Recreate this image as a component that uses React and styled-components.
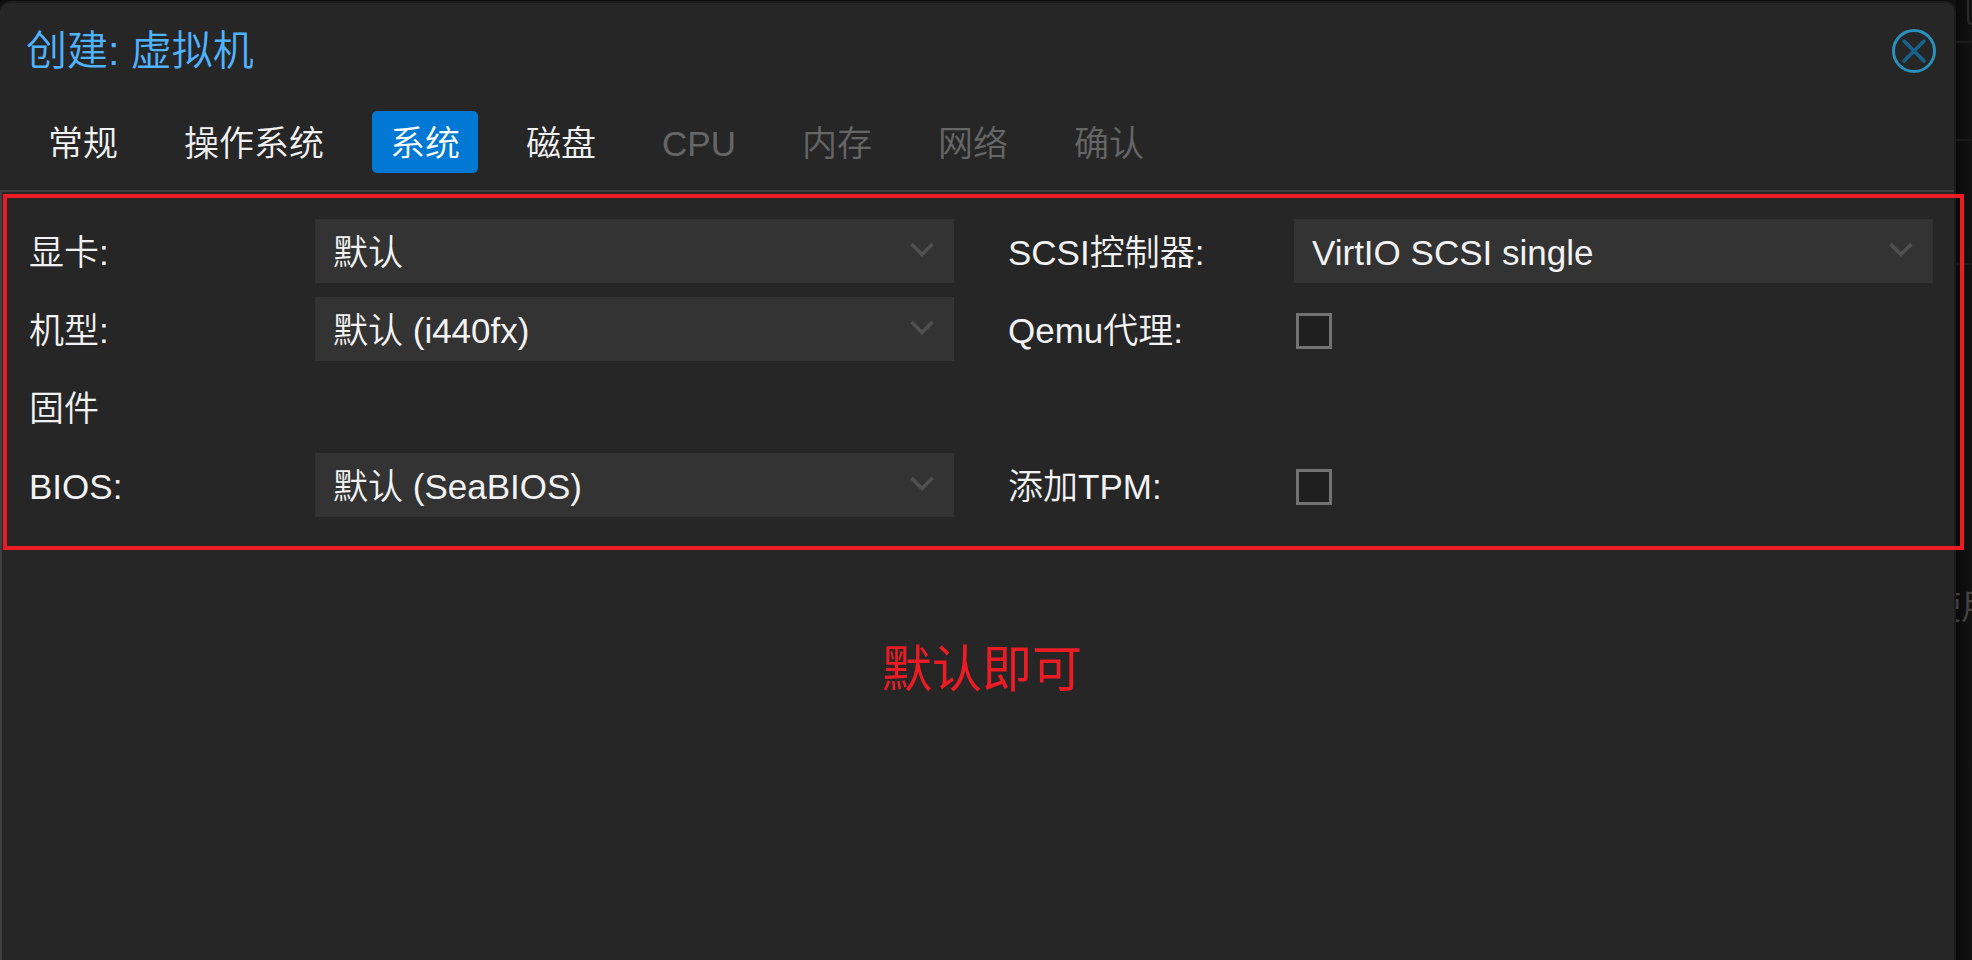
import React, { useState } from 'react';
import styled, { createGlobalStyle } from 'styled-components';

const GlobalStyle = createGlobalStyle`
  * {
    box-sizing: border-box;
  }
  body {
    margin: 0;
    background: #0e0e0e;
    color: #f2f2f2;
    font-family: "Liberation Sans", "Noto Sans CJK SC", sans-serif;
    font-size: 35px;
    font-weight: 350;
    line-height: 40px;
    overflow: hidden;
  }
  button, select, input {
    font: inherit;
    color: inherit;
  }
`;

const Page = styled.div`
  position: relative;
  min-height: 100vh;
  padding: 1px 16px 0 0;
  display: flex;
  overflow: hidden;
`;

const Backdrop = styled.div`
  position: absolute;
  top: 0;
  right: 0;
  bottom: 0;
  width: 16px;
  display: flex;
  flex-direction: column;
  align-items: flex-end;
  overflow: hidden;
  white-space: nowrap;
  color: #444;
  background:
    linear-gradient(#1c1c1c, #1c1c1c) 0 41px / 100% 2px no-repeat,
    linear-gradient(#1c1c1c, #1c1c1c) 0 139px / 100% 2px no-repeat,
    linear-gradient(#1a1a1a, #1a1a1a) 0 263px / 100% 2px no-repeat,
    linear-gradient(90deg, #090909, #131313);
`;

const BackdropButton = styled.div`
  width: 5px;
  height: 25px;
  margin-bottom: 562px;
  border: solid #2a2a2a;
  border-width: 0 0 2px 2px;
  border-bottom-left-radius: 5px;
`;

const BackdropText = styled.span`
  margin-right: -24px;
`;

const Dialog = styled.section`
  position: relative;
  flex: 1;
  display: flex;
  flex-direction: column;
  background: #262626;
  border: solid #1c1c1c;
  border-width: 2px 2px 0 0;
  border-radius: 10px 10px 0 0;
`;

const Header = styled.header`
  display: flex;
  align-items: center;
  justify-content: space-between;
  height: 96px;
  padding: 0 18px 0 26px;
`;

const Title = styled.h1`
  margin: 0;
  color: #4fb3ff;
  font-size: 41px;
  font-weight: 350;
  line-height: 48px;
`;

const CloseButton = styled.button`
  display: flex;
  padding: 0;
  border: none;
  background: none;
  cursor: pointer;
`;

const TabBar = styled.nav`
  display: flex;
  gap: 30px;
  padding: 12px 30px 17px;
  border-bottom: 2px solid #404040;
`;

const Tab = styled.button`
  height: 62px;
  padding: 4px 18px 0;
  border: none;
  border-radius: 5px;
  background: ${({ $active }) => ($active ? '#0078d4' : 'transparent')};
  color: ${({ $active }) => ($active ? '#fff' : '#f2f2f2')};
  cursor: pointer;
  &:disabled {
    color: #666;
    cursor: default;
  }
`;

const Body = styled.div`
  flex: 1;
  border-left: 2px solid #404040;
`;

const Form = styled.form`
  display: grid;
  grid-template-columns: 1fr 1fr;
  gap: 14px 54px;
  margin: 2px -10px 0 1px;
  padding: 21px 27px 29px 22px;
  border: 4px solid #ed1c24;
  position: relative;
`;

const Field = styled.div`
  display: flex;
  align-items: center;
  height: 64px;
`;

const Label = styled.label`
  flex: none;
  width: 286px;
  padding-top: 4px;
`;

const SelectWrap = styled.div`
  position: relative;
  flex: 1;
`;

const Select = styled.select`
  appearance: none;
  display: block;
  width: 100%;
  height: 64px;
  padding: 4px 60px 0 18px;
  border: none;
  border-radius: 0;
  background: #333;
`;

const Chevron = styled.svg`
  position: absolute;
  top: 22px;
  right: 20px;
  pointer-events: none;
`;

const Checkbox = styled.input`
  appearance: none;
  width: 36px;
  height: 36px;
  margin: 4px 0 0 2px;
  border: 3px solid #737373;
  background: #1f1f1f;
  &:checked {
    background: #0078d4;
  }
`;

const SectionTitle = styled.div`
  grid-column: 1 / -1;
  display: flex;
  align-items: center;
  height: 64px;
  padding-top: 4px;
`;

const Note = styled.p`
  margin: 90px 0 0 8px;
  color: #ed1c24;
  font-size: 50px;
  font-weight: 400;
  line-height: 60px;
  text-align: center;
`;

const tabs = [
  { name: '常规' },
  { name: '操作系统' },
  { name: '系统' },
  { name: '磁盘' },
  { name: 'CPU', disabled: true },
  { name: '内存', disabled: true },
  { name: '网络', disabled: true },
  { name: '确认', disabled: true },
];

const SelectField = ({ id, label, options }) => (
  <Field>
    <Label htmlFor={id}>{label}:</Label>
    <SelectWrap>
      <Select id={id} name={id}>
        {options.map((option) => (
          <option key={option}>{option}</option>
        ))}
      </Select>
      <Chevron width="24" height="18" viewBox="0 0 24 18" fill="none" stroke="#505050" strokeWidth="3.5">
        <path d="M1.5 3 L12 13.5 L22.5 3" />
      </Chevron>
    </SelectWrap>
  </Field>
);

const CheckField = ({ id, label }) => (
  <Field>
    <Label htmlFor={id}>{label}:</Label>
    <Checkbox type="checkbox" id={id} name={id} />
  </Field>
);

const App = () => {
  const [active, setActive] = useState('系统');

  return (
    <>
      <GlobalStyle />
      <Page>
        <Backdrop>
          <BackdropButton />
          <BackdropText>使用</BackdropText>
        </Backdrop>
        <Dialog>
          <Header>
            <Title>创建: 虚拟机</Title>
            <CloseButton type="button" aria-label="Close">
              <svg width="44" height="44" viewBox="0 0 44 44" fill="none" strokeLinecap="round">
                <circle cx="22" cy="22" r="20.5" stroke="#2a8fba" strokeWidth="3" />
                <path d="M12 12 L32 32 M32 12 L12 32" stroke="#176390" strokeWidth="3.5" />
              </svg>
            </CloseButton>
          </Header>
          <TabBar>
            {tabs.map((tab) => (
              <Tab
                key={tab.name}
                type="button"
                disabled={tab.disabled}
                $active={tab.name === active}
                onClick={() => setActive(tab.name)}
              >
                {tab.name}
              </Tab>
            ))}
          </TabBar>
          <Body>
            <Form>
              <SelectField id="vga" label="显卡" options={['默认']} />
              <SelectField id="scsihw" label="SCSI控制器" options={['VirtIO SCSI single']} />
              <SelectField id="machine" label="机型" options={['默认 (i440fx)', 'q35']} />
              <CheckField id="agent" label="Qemu代理" />
              <SectionTitle>固件</SectionTitle>
              <SelectField id="bios" label="BIOS" options={['默认 (SeaBIOS)', 'OVMF (UEFI)']} />
              <CheckField id="tpm" label="添加TPM" />
            </Form>
            <Note>默认即可</Note>
          </Body>
        </Dialog>
      </Page>
    </>
  );
};

export default App;
